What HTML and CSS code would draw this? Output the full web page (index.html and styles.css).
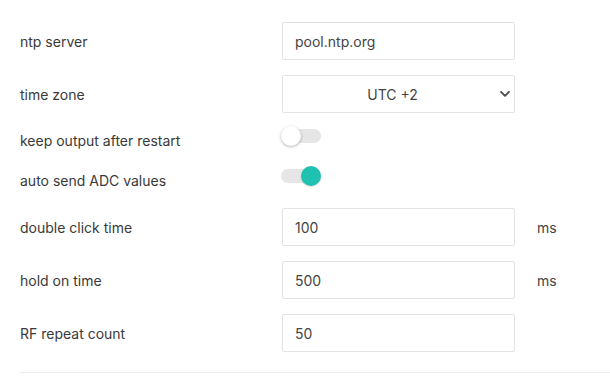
FILE: index.html
```html
<!DOCTYPE html>
<html>
<head>
<meta charset="utf-8">
<link rel="stylesheet" href="styles.css">
</head>
<body>
<form class="settings">
  <div class="row">
    <label class="label">ntp server</label>
    <input class="field" type="text" value="pool.ntp.org">
  </div>
  <div class="row row-select">
    <label class="label">time zone</label>
    <div class="select-wrap">
      <select class="field select">
        <option>UTC +2</option>
      </select>
      <svg class="chevron" width="12" height="8" viewBox="0 0 12 8"><path d="M2 1.8 L6 5.8 L10 1.8" fill="none" stroke="#4a4a4a" stroke-width="1.8" stroke-linecap="round" stroke-linejoin="round"/></svg>
    </div>
  </div>
  <div class="row toggle-row">
    <label class="label">keep output after restart</label>
    <span class="switch"><span class="track"></span><span class="knob"></span></span>
  </div>
  <div class="row toggle-row last-toggle">
    <label class="label">auto send ADC values</label>
    <span class="switch on"><span class="track"></span><span class="knob"></span></span>
  </div>
  <div class="row">
    <label class="label">double click time</label>
    <input class="field" type="text" value="100">
    <span class="unit">ms</span>
  </div>
  <div class="row">
    <label class="label">hold on time</label>
    <input class="field" type="text" value="500">
    <span class="unit">ms</span>
  </div>
  <div class="row last-row">
    <label class="label">RF repeat count</label>
    <input class="field" type="text" value="50">
  </div>
  <hr class="sep">
</form>
</body>
</html>
```
FILE: styles.css
```css
html, body {
  margin: 0;
  padding: 0;
  background: #fff;
}
body {
  font-family: Inter, "Liberation Sans", sans-serif;
  font-size: 14px;
  color: #3a3a3a;
}
.settings {
  padding: 22px 0 0 20px;
}
.row {
  display: flex;
  align-items: center;
  height: 38px;
  margin-bottom: 15px;
}
.row-select {
  margin-bottom: 13px;
}
.label {
  width: 262px;
  flex: none;
  line-height: 20px;
  margin-top: 2px;
}
.field {
  box-sizing: border-box;
  width: 233px;
  height: 38px;
  border: 1px solid #e3e3e3;
  border-radius: 2px;
  padding: 0 12px;
  font-family: Inter, "Liberation Sans", sans-serif;
  font-size: 14px;
  color: #444;
  background: #fff;
  outline: none;
  margin: 0;
}
.select-wrap {
  position: relative;
  width: 233px;
  height: 38px;
}
.select {
  appearance: none;
  -webkit-appearance: none;
  padding: 0 24px 0 12px;
  text-align: center;
  text-align-last: center;
}
.chevron {
  position: absolute;
  left: 217px;
  top: 15px;
}
.unit {
  margin-left: 22px;
  color: #444;
}
.toggle-row {
  align-items: flex-start;
  height: 25px;
  margin-bottom: 15px;
}
.toggle-row.last-toggle {
  margin-bottom: 17px;
}
.toggle-row .label {
  margin-top: 5px;
}
.switch {
  position: relative;
  display: block;
  width: 40px;
  height: 20px;
  margin-left: -1px;
}
.track {
  position: absolute;
  left: 0;
  top: 3px;
  width: 40px;
  height: 14px;
  border-radius: 7px;
  background: #e6e6e6;
}
.knob {
  position: absolute;
  left: 0;
  top: 0;
  width: 20px;
  height: 20px;
  border-radius: 50%;
  background: #fff;
  box-shadow: 0 1px 3px rgba(0,0,0,0.3);
}
.switch.on .knob {
  left: 20px;
  background: #1fc2b0;
  box-shadow: 0 1px 2px rgba(0,0,0,0.15);
}
.last-row {
  margin-bottom: 20px;
}
.sep {
  border: 0;
  border-top: 1px solid #eeeeee;
  margin: 0;
  height: 0;
}
```
